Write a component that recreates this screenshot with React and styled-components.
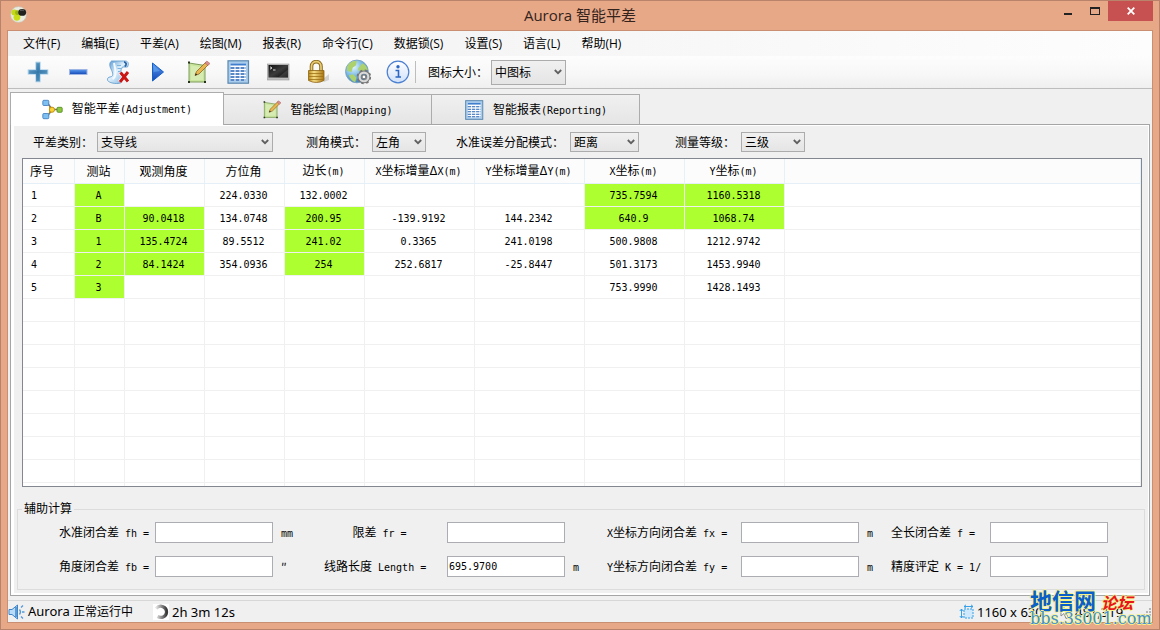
import React, { useState } from "react";
import styled, { createGlobalStyle } from "styled-components";

const SONG = '"Noto Sans CJK SC", "Liberation Sans", sans-serif';
const UI = '"Open Sans", "Noto Sans CJK SC", sans-serif';
const MONO = '"DejaVu Sans Mono", "Liberation Mono", monospace';

const GlobalStyle = createGlobalStyle`
  * { box-sizing: border-box; }
  body { margin: 0; background: #e7a888; color: #000; font: 12px/16px ${SONG}; }
  button, input, select { font: inherit; color: inherit; margin: 0; }
`;

/* ---------- window frame ---------- */
const Window = styled.div`
  height: 100vh;
  min-height: 480px;
  display: flex;
  flex-direction: column;
  padding: 0 6px 6px;
  border: 1px solid #b9826b;
  background: #e7a888;
  position: relative;
`;
const TitleBar = styled.header`
  flex: none;
  height: 29px;
  display: grid;
  grid-template-columns: 1fr auto 1fr;
`;
const TitleIcon = styled.span`
  padding: 5px 0 0 3px;
`;
const Title = styled.h1`
  margin: 0;
  font: 400 15px/28px ${UI};
  color: #33231c;
`;
const WindowButtons = styled.div`
  display: flex;
  justify-content: flex-end;
  align-items: flex-start;
`;
const WindowButton = styled.button`
  width: ${(p) => (p.$close ? 45 : 27)}px;
  height: 20px;
  padding: 0;
  border: 0;
  display: grid;
  place-items: center;
  background: ${(p) => (p.$close ? "#c75050" : "transparent")};
`;
const Client = styled.main`
  flex: 1;
  min-height: 0;
  display: flex;
  flex-direction: column;
  border: 1px solid #c98f72;
  background: #f0f0f0;
`;

/* ---------- menu and toolbar ---------- */
const MenuBar = styled.nav`
  flex: none;
  height: 25px;
  display: flex;
  align-items: center;
  gap: 21px;
  padding-left: 15px;
  background: linear-gradient(to right, #f0f0f0, #fdfdfd);
`;
const MenuButton = styled.button`
  padding: 0;
  border: 0;
  background: none;
  font: 12px/18px ${UI};
  white-space: nowrap;
`;
const ToolBar = styled.div`
  flex: none;
  height: 33px;
  display: flex;
  align-items: center;
  padding-left: 10px;
  border-bottom: 1px solid #bdbdbd;
  background: linear-gradient(#fdfdfd, #f7f7f7 60%, #efefef);
`;
const ToolButton = styled.button`
  width: 40px;
  height: 28px;
  padding: 0;
  border: 0;
  background: none;
  display: grid;
  place-items: center;
`;
const Separator = styled.span`
  width: 1px;
  height: 22px;
  margin: 0 12px 0 -3px;
  background: #bdbdbd;
`;
const ToolLabel = styled.label`
  width: 63px;
  white-space: nowrap;
`;

/* ---------- drop-down ---------- */
const SelectBox = styled.span`
  position: relative;
  display: block;
  width: ${(p) => p.$width}px;
  height: ${(p) => p.$height || 20}px;
  svg {
    position: absolute;
    right: 4px;
    top: 50%;
    margin-top: -3px;
    pointer-events: none;
  }
`;
const NativeSelect = styled.select`
  appearance: none;
  display: block;
  width: 100%;
  height: 100%;
  padding: 0 14px 0 3px;
  border: 1px solid #acacac;
  border-radius: 0;
  background: linear-gradient(#f0f0f0, #e5e5e5);
  line-height: 16px;
`;

/* ---------- tabs ---------- */
const TabList = styled.div`
  flex: none;
  display: flex;
  align-items: flex-end;
  padding: 3px 2px 0;
`;
const Tab = styled.button`
  width: ${(p) => (p.$active ? 214 : 208)}px;
  height: ${(p) => (p.$active ? 33 : 30)}px;
  margin-bottom: ${(p) => (p.$active ? -1 : 0)}px;
  padding: 0;
  display: flex;
  align-items: center;
  justify-content: center;
  gap: 9px;
  border: 1px solid #acacac;
  border-bottom-width: 0;
  border-left-width: ${(p) => (p.$active ? 1 : 0)}px;
  background: ${(p) => (p.$active ? "#fff" : "linear-gradient(#f0f0f0, #e5e5e5)")};
  position: relative;
  white-space: nowrap;
`;
const Panel = styled.section`
  flex: 1;
  min-height: 0;
  display: flex;
  margin: 0 2px 4px;
  padding: 1px 1px 2px 3px;
  border: 1px solid #a5a5a5;
  background: #fff;
`;
const PanelBody = styled.div`
  flex: 1;
  min-width: 0;
  display: flex;
  flex-direction: column;
  padding: 6px 3px 3px;
  background: #f0f0f0;
`;
const FilterRow = styled.div`
  flex: none;
  display: grid;
  grid-template-columns: 64px 209px 66px 84px 114px 105px 66px 64px;
  align-items: center;
  padding: 0 0 6px 16px;
  white-space: nowrap;
`;
const Latin = styled.span`
  font-family: ${MONO};
  font-size: 10px;
  white-space: pre;
`;

/* ---------- data grid ---------- */
const GridFrame = styled.div`
  flex: 1 1 0;
  min-height: 120px;
  margin: 0 3px 0 5px;
  overflow: hidden;
  border: 1px solid #828790;
  background: #fff;
`;
const Table = styled.table`
  width: 100%;
  table-layout: fixed;
  border-collapse: separate;
  border-spacing: 0;
`;
const HeadCell = styled.th`
  height: 25px;
  padding: ${(p) => (p.$first ? "0 0 0 7px" : "0 2px 0 0")};
  text-align: ${(p) => (p.$first ? "left" : "center")};
  font-weight: 400;
  white-space: nowrap;
  background: #fcfcfc;
  border-right: 1px solid #e5f0f9;
  border-bottom: 1px solid #e5eff7;
`;
const Cell = styled.td`
  height: 23px;
  padding: ${(p) => (p.$first ? "0 0 0 8px" : "0 2px 0 0")};
  text-align: ${(p) => (p.$first ? "left" : "center")};
  line-height: 16px;
  white-space: nowrap;
  background: ${(p) => (p.$given ? "#adff2f" : "#fff")};
  border-right: 1px solid #f0f0f0;
  border-bottom: 1px solid #f0f0f0;
`;

/* ---------- auxiliary results ---------- */
const Group = styled.fieldset`
  flex: none;
  min-width: 0;
  margin: 14px 0 0;
  padding: 5px 0 12px 41px;
  border: 1px solid #dcdcdc;
  display: grid;
  grid-template-columns: 90px 118px 39px 117px 118px 30px 128px 118px 20px 93px 118px;
  gap: 13px 6px;
  align-items: center;
`;
const Legend = styled.legend`
  margin-left: -37px;
  padding: 0 2px;
  height: 16px;
  line-height: 14px;
`;
const FieldLabel = styled.label`
  white-space: nowrap;
  text-align: ${(p) => (p.$center ? "center" : "left")};
  padding-right: ${(p) => (p.$center ? 6 : 0)}px;
`;
const Unit = styled.span`
  padding-left: 2px;
`;
const Field = styled.input`
  width: 100%;
  height: 21px;
  padding: 0 1px 1px;
  border: 1px solid #abadb3;
  background: #fff;
  font: 10px/16px ${MONO};
`;

/* ---------- status bar ---------- */
const StatusBar = styled.footer`
  flex: none;
  height: 22px;
  display: flex;
  align-items: center;
  border-top: 1px solid #d7d7d7;
  font: 12px/18px "Noto Sans", "Noto Sans CJK SC", sans-serif;
`;
const StatusItem = styled.span`
  display: flex;
  align-items: center;
  gap: 3px;
  width: ${(p) => (p.$width ? p.$width + "px" : "auto")};
  margin-left: ${(p) => (p.$push ? "auto" : 0)};
  white-space: nowrap;
`;
const StatusText = styled.span`
  font-size: 13px;
`;
const Watermark = styled.div`
  position: absolute;
  right: 5px;
  bottom: 2px;
  width: 124px;
  color: #0b5fc8;
  font: 700 22px/18px "Noto Sans CJK SC", sans-serif;
  text-shadow: 1px 0 #f6f28a, -1px 0 #f6f28a, 0 1px #f6f28a, 0 -1px #f6f28a;
  white-space: nowrap;
  pointer-events: none;
`;
const WatermarkRed = styled.span`
  margin-left: 5px;
  color: #e8141c;
  font-size: 16px;
  font-style: italic;
`;
const WatermarkUrl = styled.div`
  color: #3f8fd8;
  font: 400 16px/16px "DejaVu Serif", serif;
`;

/* ---------- icons ---------- */
const Svg = ({ w = 24, h = w, box = "0 0 24 24", children }) => (
  <svg width={w} height={h} viewBox={box} fill="none" aria-hidden="true">
    {children}
  </svg>
);

const Gradients = () => (
  <svg width="0" height="0" aria-hidden="true">
    <defs>
      <linearGradient id="steel" x1="0" y1="0" x2="1" y2="1">
        <stop offset="0" stopColor="#8fc0e0" /><stop offset=".5" stopColor="#3f83b4" /><stop offset="1" stopColor="#7fb6d8" />
      </linearGradient>
      <linearGradient id="blue" x1="0" y1="0" x2="0" y2="1">
        <stop offset="0" stopColor="#5b9bef" /><stop offset="1" stopColor="#1247b5" />
      </linearGradient>
      <linearGradient id="paper" x1="0" y1="0" x2="1" y2="1">
        <stop offset="0" stopColor="#4f94cd" /><stop offset=".45" stopColor="#e0f0fc" /><stop offset="1" stopColor="#6aa8da" />
      </linearGradient>
      <linearGradient id="dark" x1="0" y1="0" x2="1" y2="1">
        <stop offset="0" stopColor="#111" /><stop offset=".5" stopColor="#3c3c3c" /><stop offset="1" stopColor="#000" />
      </linearGradient>
      <linearGradient id="gold" x1="0" y1="0" x2="1" y2="0">
        <stop offset="0" stopColor="#b98a1e" /><stop offset=".35" stopColor="#f6dc83" /><stop offset="1" stopColor="#a87410" />
      </linearGradient>
      <radialGradient id="globe" cx=".35" cy=".3" r=".8">
        <stop offset="0" stopColor="#e4f6fd" /><stop offset=".5" stopColor="#79b9e3" /><stop offset="1" stopColor="#2d74b6" />
      </radialGradient>
      <linearGradient id="info" x1="0" y1="0" x2="0" y2="1">
        <stop offset="0" stopColor="#fff" /><stop offset="1" stopColor="#cfe0fa" />
      </linearGradient>
      <linearGradient id="spin" x1="0" y1="0" x2="1" y2="0">
        <stop offset="0" stopColor="#e8e8e8" /><stop offset="1" stopColor="#3a3a3a" />
      </linearGradient>
    </defs>
  </svg>
);

const AppIcon = () => (
  <Svg w={17} box="0 0 16 16">
    <circle cx="8" cy="8" r="7.5" fill="#e9ecdf" stroke="#c5bca8" strokeWidth=".6" />
    <circle cx="4" cy="6" r="2.8" fill="#c4d81a" />
    <circle cx="6.5" cy="10.7" r="3.2" fill="#c9dd16" />
    <circle cx="7" cy="6.3" r="2.2" fill="#98b313" />
    <ellipse cx="11.5" cy="6" rx="3.7" ry="3.2" fill="#1e211d" />
    <path d="M9.5 4.4q2-1 3.5 0" stroke="#777" strokeWidth=".7" />
  </Svg>
);
const PlusIcon = () => (
  <Svg>
    <path d="M9.5 2h5v7.5H22v5h-7.5V22h-5v-7.500H2v-5h7.500z" fill="url(#steel)" stroke="#c7dfee" strokeWidth="1" />
    <path d="M12 3.500v17M3.500 12h17" stroke="#2f6d9c" strokeWidth="1.200" opacity=".6" />
  </Svg>
);
const MinusIcon = () => (
  <Svg>
    <rect x="3.500" y="9.500" width="17.500" height="5" fill="url(#blue)" stroke="#9fb6e4" />
  </Svg>
);
const ScrollDeleteIcon = () => (
  <Svg>
    <path d="M5.500 1h14c3 .3 3.500 3 2 6h-5c-2 3-2.500 6-1 9l1 6c-3 2-9 2-13 0-3-1-2.500-5 .5-5 4-.5 3-4 1-8-1.500-3-2-6 .5-8z" fill="url(#paper)" stroke="#5c98ca" strokeWidth=".8" />
    <path d="M8 3c1 4 1.500 7 1.500 10 0 3-1 5-3 6" stroke="#f4faff" strokeWidth="2" />
    <path d="M11 5.500h4M11.500 8.500h3.500M12 11.500h2" stroke="#7db4df" strokeWidth="1" />
    <path d="M18 1.800c2.500.7 3 3 .7 4.700" stroke="#2c64a4" strokeWidth="1.800" />
    <path d="M14.500 12.500l8 9M22.500 12l-8.500 10" stroke="#fff" strokeWidth="4.500" />
    <path d="M14.500 12.500l7.500 9M22 12l-8 10" stroke="#cb1616" strokeWidth="3" />
  </Svg>
);
const PlayIcon = () => (
  <Svg>
    <path d="M6.500 3l11 9-11 9z" fill="url(#blue)" stroke="#1560c8" strokeWidth="1" />
    <path d="M7.500 5.500l6.500 5.500-6.500 1z" fill="#66a9f2" opacity=".6" />
  </Svg>
);
const DrawIcon = ({ w = 24 }) => (
  <Svg w={w}>
    <path d="M3 3l16 2.500V22H3z" fill="#c9e59c" stroke="#7c9c5c" strokeWidth="1" />
    <path d="M5 5.500l12 2V20H5z" fill="#dcefbe" opacity=".7" />
    <path d="M9 15.500l1.500-4L20 2l2.500 2.500L13 14z" fill="#e8b64f" stroke="#8d6526" strokeWidth=".8" />
    <path d="M19 3l1.800-2L24 3.500 22 5.500z" fill="#d98e8e" stroke="#a15858" strokeWidth=".5" />
    <path d="M9 15.500l.8-2.200 1.400 1.400z" fill="#222" />
    <path d="M2 1.500h2v2H2zM2 21h2v2H2zM18 21h2v2h-2z" fill="#25331a" />
  </Svg>
);
const SheetIcon = ({ w = 24 }) => (
  <Svg w={w}>
    <rect x="2" y=".8" width="20.500" height="22.400" fill="#a9cdec" stroke="#5a88b0" strokeWidth="1.200" />
    <rect x="4.500" y="3.500" width="15.500" height="17.500" fill="#fff" />
    <path d="M4.500 4.500h15.500" stroke="#3f7fce" strokeWidth="2" />
    <path d="M4.500 8h15.500M4.500 11h15.500M4.500 14h15.500M4.500 17h15.500M4.500 20h15.500" stroke="#2361b4" strokeWidth="1.300" strokeDasharray="4 1" />
  </Svg>
);
const ConsoleIcon = () => (
  <Svg>
    <rect x="1.500" y="4" width="21.500" height="16" fill="#bcbcbc" stroke="#999" strokeWidth=".6" />
    <rect x="2.500" y="5" width="19.500" height="12.500" fill="url(#dark)" />
    <path d="M4 6.800l2 1.200-2 1.200M7 10h2.500" stroke="#eee" strokeWidth=".9" />
    <path d="M12 17.500l10-8v8z" fill="#666" opacity=".4" />
  </Svg>
);
const LockIcon = () => (
  <Svg>
    <path d="M17 19l6-5v6l-5 2z" fill="#bbb" opacity=".6" />
    <path d="M5.500 11V6.500c0-6.500 9.500-6.500 9.500 0V11" stroke="#8b6a20" strokeWidth="3.600" />
    <path d="M5.500 11V6.500c0-6.500 9.500-6.500 9.500 0V11" stroke="#e8cb72" strokeWidth="1.700" />
    <path d="M2.500 10.500h15.500v10q-7.500 4-15.500 0z" fill="url(#gold)" stroke="#8d6414" strokeWidth=".8" />
    <path d="M3 13.500h14.500M3 16.500h14.500M3 19.500h14.500" stroke="#9c7116" strokeWidth=".8" />
  </Svg>
);
const GlobeIcon = () => (
  <Svg w={26}>
    <circle cx="11" cy="11.500" r="10.500" fill="url(#globe)" stroke="#769fbb" strokeWidth=".8" />
    <path d="M2 7c2-4 6-5.500 9-5l-1 4-3 2-1 4-4-1zM12 9l4-5c3 1 4.500 4 5 6l-4 2-4-1zM3.500 15l4-1 3 3-1 4.500c-3-1-5-3.500-6-6.500z" fill="#acd16d" />
    <circle cx="17.500" cy="16.500" r="4.200" stroke="#777" strokeWidth="3.500" />
    <circle cx="17.500" cy="16.500" r="5.500" stroke="#777" strokeWidth="2.500" strokeDasharray="2.200 2.120" />
    <circle cx="17.500" cy="16.500" r="4" stroke="#d9d9d9" strokeWidth="2" />
    <circle cx="17.500" cy="16.500" r="1.800" fill="#fff" stroke="#777" />
  </Svg>
);
const InfoIcon = () => (
  <Svg>
    <circle cx="12" cy="12" r="10.800" fill="url(#info)" stroke="#4a7ed0" strokeWidth="1.200" />
    <circle cx="12" cy="6.800" r="1.700" fill="#2c66c4" />
    <path d="M9.500 10.500h3v6.500M9.500 17h5.500" stroke="#2c66c4" strokeWidth="1.600" />
  </Svg>
);
const NetworkIcon = () => (
  <Svg w={21} box="0 0 21 20">
    <path d="M5 3l5 6.500M5 17l5-6.500M10 10h6" stroke="#777" strokeWidth="1.600" />
    <rect x=".8" y=".8" width="6" height="5.200" rx="1" fill="#7fc0f3" stroke="#3977ba" strokeWidth=".8" />
    <rect x=".8" y="14" width="6" height="5.200" rx="1" fill="#7fc0f3" stroke="#3977ba" strokeWidth=".8" />
    <path d="M7.500 7l5.500 3-5.500 3.500z" fill="#fbd231" stroke="#b38312" strokeWidth=".8" />
    <circle cx="10" cy="10.200" r="2.600" fill="#fbd231" stroke="#b38312" strokeWidth=".8" />
    <rect x="15" y="7.800" width="5.200" height="5" rx="1" fill="#8fc83c" stroke="#4c861e" strokeWidth=".8" />
  </Svg>
);
const Chevron = () => (
  <Svg w={8} h={6} box="0 0 8 6">
    <path d="M.8 1l3.200 3.200L7.200 1" stroke="#606060" strokeWidth="1.800" />
  </Svg>
);
const SpeakerIcon = () => (
  <Svg w={17} h={16} box="0 0 17 16">
    <path d="M1 5.500h3L9.500 1v14L4 10.500H1z" fill="#b8dcf8" stroke="#3f84c8" />
    <path d="M8 3v10" stroke="#3f84c8" strokeWidth="1.500" />
    <path d="M11.500 5.500q2 2.500 0 5M13 3.500l2-2M14 8h2.500M13 12.500l2 2" stroke="#5298da" strokeWidth="1.300" />
  </Svg>
);
const SpinnerIcon = () => (
  <Svg w={16} box="0 0 16 16">
    <rect width="16" height="16" fill="#fff" />
    <path d="M3 4.500C7 0 14 3 13.500 8.500 13 13 8 14.500 4.500 12.500" stroke="url(#spin)" strokeWidth="3.200" />
  </Svg>
);
const SizeIcon = () => (
  <Svg w={15} box="0 0 15 15">
    <path d="M5 5h9v9H5z" fill="#cfe8fb" stroke="#36a0e8" strokeDasharray="2 1" />
    <path d="M5 2.500h9M7 .8L5 2.500l2 1.700M12 .8l2 1.700-2 1.700M2.500 5v9M.8 7l1.700-2 1.700 2M.8 12l1.700 2 1.700-2" stroke="#36a0e8" />
  </Svg>
);
const CursorIcon = () => (
  <Svg w={12} h={16} box="0 0 12 16">
    <path d="M1 1v11l3-2.500 2 5 2-1-2-4.500h4z" fill="#fff" stroke="#888" />
  </Svg>
);
const GripIcon = () => (
  <Svg w={10} box="0 0 10 10">
    <path d="M7 1h2v2H7zM4 4h2v2H4zM7 4h2v2H7zM1 7h2v2H1zM4 7h2v2H4zM7 7h2v2H7z" fill="#b5b5b5" />
  </Svg>
);

/* ---------- data ---------- */
const MENUS = ["文件(F)", "编辑(E)", "平差(A)", "绘图(M)", "报表(R)", "命令行(C)", "数据锁(S)", "设置(S)", "语言(L)", "帮助(H)"];
const TOOLS = [
  ["添加", PlusIcon], ["删除", MinusIcon], ["清空", ScrollDeleteIcon], ["计算", PlayIcon], ["绘图", DrawIcon],
  ["报表", SheetIcon], ["命令行", ConsoleIcon], ["数据锁", LockIcon], ["设置", GlobeIcon], ["关于", InfoIcon],
];
const TABS = [
  ["智能平差(Adjustment)", <NetworkIcon />],
  ["智能绘图(Mapping)", <DrawIcon w={19} />],
  ["智能报表(Reporting)", <SheetIcon w={20} />],
];
const FILTERS = [
  ["平差类别：", "支导线", 176], ["测角模式：", "左角", 54], ["水准误差分配模式：", "距离", 69], ["测量等级：", "三级", 64],
];
const COLUMNS = [
  ["序号", 52], ["测站", 50], ["观测角度", 80], ["方位角", 80], ["边长(m)", 80], ["X坐标增量ΔX(m)", 110],
  ["Y坐标增量ΔY(m)", 110], ["X坐标(m)", 100], ["Y坐标(m)", 100], ["", null],
];
const ROWS = [
  ["1", "A", "", "224.0330", "132.0002", "", "", "735.7594", "1160.5318", ""],
  ["2", "B", "90.0418", "134.0748", "200.95", "-139.9192", "144.2342", "640.9", "1068.74", ""],
  ["3", "1", "135.4724", "89.5512", "241.02", "0.3365", "241.0198", "500.9808", "1212.9742", ""],
  ["4", "2", "84.1424", "354.0936", "254", "252.6817", "-25.8447", "501.3173", "1453.9940", ""],
  ["5", "3", "", "", "", "", "", "753.9990", "1428.1493", ""],
  ...Array.from({ length: 9 }, () => Array(10).fill("")),
];
const GIVEN = [[1, 7, 8], [1, 2, 4, 7, 8], [1, 2, 4], [1, 2, 4], [1]];
const FIELDS = [
  ["水准闭合差 fh =", "", "mm"], ["限差 fr =", "", "", true], ["X坐标方向闭合差 fx =", "", "m"], ["全长闭合差 f =", ""],
  ["角度闭合差 fb =", "", "″"], ["线路长度 Length =", "695.9700", "m"], ["Y坐标方向闭合差 fy =", "", "m"], ["精度评定 K = 1/", ""],
];

/* Half-width runs are set in the monospaced face, ideographs in the text face. */
const Mixed = ({ text }) =>
  text.split(/([\x20-\x7e]+)/).map((run, i) => (i % 2 ? <Latin key={i}>{run}</Latin> : run));

const Select = ({ id, value, width, height }) => (
  <SelectBox $width={width} $height={height}>
    <NativeSelect id={id} defaultValue={value}>
      <option>{value}</option>
    </NativeSelect>
    <Chevron />
  </SelectBox>
);

export default function App() {
  const [active, setActive] = useState(0);
  return (
    <Window>
      <GlobalStyle />
      <TitleBar>
        <TitleIcon><AppIcon /></TitleIcon>
        <Title>Aurora 智能平差</Title>
        <WindowButtons>
          <WindowButton aria-label="最小化">
            <Svg w={10} box="0 0 10 10"><path d="M1 7h8v2H1z" fill="#222" /></Svg>
          </WindowButton>
          <WindowButton aria-label="最大化">
            <Svg w={10} h={8} box="0 0 10 8"><path d="M0 0h10v8H0zM1 2v5h8V2z" fill="#222" fillRule="evenodd" /></Svg>
          </WindowButton>
          <WindowButton $close aria-label="关闭">
            <Svg w={8} box="0 0 8 8"><path d="M.7.7l6.600 6.600M7.300.7L.7 7.300" stroke="#fff" strokeWidth="1.800" /></Svg>
          </WindowButton>
        </WindowButtons>
      </TitleBar>

      <Client>
        <MenuBar>
          {MENUS.map((m) => <MenuButton key={m}>{m}</MenuButton>)}
        </MenuBar>
        <ToolBar>
          {TOOLS.map(([name, Icon]) => (
            <ToolButton key={name} aria-label={name}><Icon /></ToolButton>
          ))}
          <Separator />
          <ToolLabel htmlFor="icon-size">图标大小：</ToolLabel>
          <Select id="icon-size" value="中图标" width={75} height={25} />
        </ToolBar>

        <TabList role="tablist">
          {TABS.map(([name, icon], i) => (
            <Tab key={name} role="tab" aria-selected={i === active} $active={i === active} onClick={() => setActive(i)}>
              {icon}
              <span><Mixed text={name} /></span>
            </Tab>
          ))}
        </TabList>

        <Panel>
          <PanelBody>
            <FilterRow>
              {FILTERS.map(([label, value, width], i) => (
                <React.Fragment key={label}>
                  <label htmlFor={`filter-${i}`}>{label}</label>
                  <Select id={`filter-${i}`} value={value} width={width} />
                </React.Fragment>
              ))}
            </FilterRow>

            <GridFrame>
              <Table>
                <colgroup>
                  {COLUMNS.map(([name, w]) => <col key={name} width={w || undefined} />)}
                </colgroup>
                <thead>
                  <tr>
                    {COLUMNS.map(([name], i) => (
                      <HeadCell key={name} $first={i === 0}><Mixed text={name} /></HeadCell>
                    ))}
                  </tr>
                </thead>
                <tbody>
                  {ROWS.map((row, r) => (
                    <tr key={r}>
                      {row.map((value, c) => (
                        <Cell key={c} $first={c === 0} $given={GIVEN[r]?.includes(c)}><Mixed text={value} /></Cell>
                      ))}
                    </tr>
                  ))}
                </tbody>
              </Table>
            </GridFrame>

            <Group>
              <Legend>辅助计算</Legend>
              {FIELDS.map(([label, value, unit, center], i) => (
                <React.Fragment key={label}>
                  <FieldLabel htmlFor={`field-${i}`} $center={center}><Mixed text={label} /></FieldLabel>
                  <Field id={`field-${i}`} defaultValue={value} />
                  {unit !== undefined && <Unit><Mixed text={unit} /></Unit>}
                </React.Fragment>
              ))}
            </Group>
          </PanelBody>
        </Panel>

        <StatusBar>
          <StatusItem $width={145}><SpeakerIcon /><span><StatusText>Aurora </StatusText>正常运行中</span></StatusItem>
          <StatusItem><SpinnerIcon /><StatusText>2h 3m 12s</StatusText></StatusItem>
          <StatusItem $push $width={101}><SizeIcon /><StatusText>1160 x 630</StatusText></StatusItem>
          <StatusItem $width={82}><CursorIcon /><StatusText>481,319</StatusText></StatusItem>
          <GripIcon />
        </StatusBar>
      </Client>

      <Watermark>
        地信网<WatermarkRed>论坛</WatermarkRed>
        <WatermarkUrl>bbs.3s001.com</WatermarkUrl>
      </Watermark>
      <Gradients />
    </Window>
  );
}
